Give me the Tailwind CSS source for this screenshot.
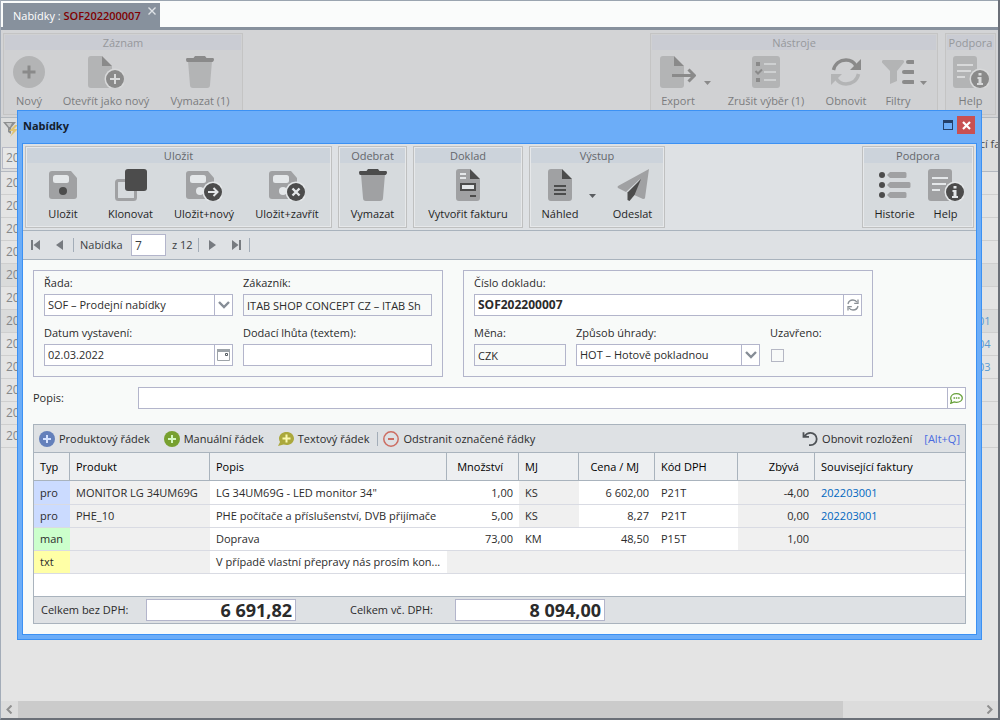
<!DOCTYPE html>
<html lang="cs">
<head>
  <meta charset="UTF-8">
  <title>Nabídky : SOF202200007</title>
  <meta name="viewport" content="width=device-width, initial-scale=1.0">
  <script src="https://cdn.jsdelivr.net/npm/@tailwindcss/browser@4"></script>
</head>
<body class="font-['Open_Sans','Noto_Sans',sans-serif] text-[11px] leading-4 text-[#2b2b2b]">

  <!-- icons: --hi dark part, --lo light part, --cut gaps -->
  <svg class="hidden" aria-hidden="true">
    <symbol id="i-new" viewBox="0 0 32 32"><circle cx="16" cy="16" r="16" class="fill-(--lo)"/><path d="M14.500 9.500h3v5h5v3h-5v5h-3v-5h-5v-3h5z" class="fill-(--hi)"/></symbol>
    <symbol id="i-doc" viewBox="0 0 32 32"><path d="M7 0h11v8q0 2 2 2h8v19a3 3 0 0 1-3 3H7a3 3 0 0 1-3-3V3a3 3 0 0 1 3-3z" class="fill-(--lo)"/><path d="M18 0l10 10H18z" class="fill-(--hi)"/></symbol>
    <symbol id="i-open" viewBox="0 0 36 32"><path d="M3 0h11v10h10v19a3 3 0 0 1-3 3H3a3 3 0 0 1-3-3V3a3 3 0 0 1 3-3z" class="fill-(--lo)"/><path d="M14 0l10 10H14z" class="fill-(--hi)"/><circle cx="27" cy="23" r="10.500" class="fill-(--cut)"/><circle cx="27" cy="23" r="9" class="fill-(--hi)"/><path d="M26 18h2v4h4v2h-4v4h-2v-4h-4v-2h4z" class="fill-(--cut)"/></symbol>
    <symbol id="i-trash" viewBox="0 0 32 32"><path d="M4 5h24l-2 24a3 3 0 0 1-3 3H9a3 3 0 0 1-3-3z" class="fill-(--lo)"/><path d="M11 0h10l1.500 2H29q1 0 1 1.500T28.500 6h-25Q2 6 2 3.500 2 2 3 2h6.500z" class="fill-(--hi)"/></symbol>
    <symbol id="i-export" viewBox="0 0 36 32"><path d="M3 0h11v10h10v19a3 3 0 0 1-3 3H3a3 3 0 0 1-3-3V3a3 3 0 0 1 3-3z" class="fill-(--lo)"/><path d="M14 0l10 10H14z" class="fill-(--hi)"/><path d="M12 19.500h22M28.500 13.500l6 6-6 6" fill="none" stroke-width="3" class="stroke-(--hi)"/></symbol>
    <symbol id="i-checks" viewBox="0 0 32 32"><rect x="2" width="28" height="32" rx="3" class="fill-(--lo)"/><path d="M6 6h4v4H6zM6 22h4v4H6z" class="fill-(--hi)"/><path d="M5.500 15l2.500 2.500 4-4" fill="none" stroke-width="2" class="stroke-(--hi)"/><path d="M14 8h12M14 16h12M14 24h12" stroke-width="1.500" class="stroke-(--cut)"/></symbol>
    <symbol id="i-refresh" viewBox="0 0 32 32"><path d="M3.500 14C5 7.500 10 4 16 4c4 0 8 2 10 6" fill="none" stroke-width="3.500" class="stroke-(--hi)"/><path d="M31 3v11H20z" class="fill-(--hi)"/><path d="M28.500 18C27 24.500 22 28 16 28c-4 0-8-2-10-6" fill="none" stroke-width="3.500" class="stroke-(--lo)"/><path d="M1 29V18h11z" class="fill-(--lo)"/></symbol>
    <symbol id="i-filter" viewBox="0 0 32 32"><path d="M1 4h20q2 1 .5 3L15 15v10l-7 3V15L.5 7Q-1 5 1 4z" class="fill-(--lo)"/><path d="M26 6h5M22 16h9M22 26h9" stroke-width="4" stroke-linecap="round" class="stroke-(--hi)"/></symbol>
    <symbol id="i-help" viewBox="0 0 36 32"><rect width="24" height="32" rx="3" class="fill-(--lo)"/><path d="M4 9h16M4 15h14M4 21h8" stroke-width="1.800" class="stroke-(--cut)"/><circle cx="27" cy="23" r="10.500" class="fill-(--cut)"/><circle cx="27" cy="23" r="9" class="fill-(--hi)"/><path d="M25.500 17h3v2.500h-3zM24.500 21h4v6h1.500v2h-6v-2h1.500v-4h-1z" class="fill-(--cut)"/></symbol>
    <symbol id="i-floppy" viewBox="0 0 36 32"><path d="M3 2h19l6 7v18a3 3 0 0 1-3 3H3a3 3 0 0 1-3-3V5a3 3 0 0 1 3-3z" class="fill-(--lo)"/><rect x="4" y="6" width="16" height="8" rx="2.500" class="fill-(--cut)"/></symbol>
    <symbol id="i-save" viewBox="0 0 32 32"><use href="#i-floppy" x="2" width="36" height="32"/><circle cx="16" cy="22" r="4" class="fill-(--hi)"/></symbol>
    <symbol id="i-savenew" viewBox="0 0 36 32"><use href="#i-floppy" width="36" height="32"/><circle cx="14" cy="22" r="4" class="fill-(--cut)"/><circle cx="27" cy="23" r="10.500" class="fill-(--cut)"/><circle cx="27" cy="23" r="9" class="fill-(--hi)"/><path d="M22 23h9M27.500 19l4 4-4 4" fill="none" stroke-width="2" class="stroke-(--cut)"/></symbol>
    <symbol id="i-saveclose" viewBox="0 0 36 32"><use href="#i-floppy" width="36" height="32"/><circle cx="14" cy="22" r="4" class="fill-(--cut)"/><circle cx="27" cy="23" r="10.500" class="fill-(--cut)"/><circle cx="27" cy="23" r="9" class="fill-(--hi)"/><path d="M23.500 19.500l7 7M30.500 19.500l-7 7" stroke-width="2.400" class="stroke-(--cut)"/></symbol>
    <symbol id="i-clone" viewBox="0 0 32 32"><rect x="1.500" y="11.500" width="19" height="19" rx="2" fill="none" stroke-width="3" class="stroke-(--lo)"/><rect x="10" width="22" height="22" rx="3" class="fill-(--hi)"/></symbol>
    <symbol id="i-invoice" viewBox="0 0 32 32"><use href="#i-doc" width="32" height="32"/><path d="M8 5h6M8 9h6" stroke-width="2" class="stroke-(--cut)"/><rect x="9" y="15" width="14" height="6" stroke-width="2" class="fill-(--cut) stroke-(--hi)"/><path d="M18 27h6" stroke-width="2" class="stroke-(--hi)"/></symbol>
    <symbol id="i-preview" viewBox="0 0 32 32"><use href="#i-doc" width="32" height="32"/><path d="M10 17h12M10 21h12M10 25h12" stroke-width="2" class="stroke-(--hi)"/></symbol>
    <symbol id="i-send" viewBox="0 0 32 32"><path d="M32 0L1 17q-1 1 0 2l8 4 14-13L15 25l11 5q2 0 2-1z" class="fill-(--lo)"/><path d="M24 10L10.500 23.500V31l2 1 5-6z" class="fill-(--hi)"/></symbol>
    <symbol id="i-history" viewBox="0 0 32 32"><g class="fill-(--hi)"><circle cx="3" cy="6" r="3"/><circle cx="3" cy="16" r="3"/><circle cx="3" cy="26" r="3"/></g><path d="M8 6l3-3h15q1.500 0 1.500 1.500v3Q27.500 9 26 9H11zM8 16l3-3h19q1.500 0 1.500 1.500v3q0 1.500-1.500 1.500H11zM8 26l3-3h15q1.500 0 1.500 1.500v3q0 1.500-1.500 1.500H11z" class="fill-(--lo)"/></symbol>
    <symbol id="i-chevron" viewBox="0 0 12 8"><path d="M1 1l5 5 5-5" fill="none" stroke="#868d96" stroke-width="2.400"/></symbol>
    <symbol id="i-plus" viewBox="0 0 16 16"><circle cx="8" cy="8" r="8" fill="currentColor"/><path d="M7 4h2v3h3v2H9v3H7V9H4V7h3z" class="fill-(--cut)"/></symbol>
  </svg>

  <div class="relative flex flex-col min-h-screen overflow-hidden border-l border-l-[#a3acb8] border-r-2 border-r-[#6b7078] border-b-2 border-b-[#6b7078] bg-[#e4e4e4]">

    <header class="flex items-end h-[30px] pl-[2px] bg-[#fafcfb] border-t border-t-[#9aa5b0] border-b-3 border-b-[#87919d]">
      <div class="flex items-start h-6 w-[157px] pl-[10px] pr-1 bg-[#87919d] text-white">
        <span class="pt-[5px] font-medium flex-1 whitespace-nowrap">Nabídky : <span class="font-semibold text-[#800000]">SOF202200007</span></span>
        <button class="p-0 mt-1" aria-label="Zavřít záložku"><svg class="w-2 h-2" viewBox="0 0 8 8"><path d="M.5.5l7 7M7.500.5l-7 7" stroke="#dfe3e7" stroke-width="1.400"/></svg></button>
      </div>
    </header>

    <!-- main ribbon -->
    <div class="flex justify-between px-[2px] pt-[3px] pb-[2px] bg-[#d3d4d6] border-b border-[#b3b8bd] text-[#7b7c7e] [--hi:#8a8a8a] [--lo:#b3b4b5] [--cut:#d8d9da]">
      <section class="border border-[#c4c4c4] p-px bg-[#d0d1d3]">
        <h2 class="h-[15px] leading-[15px] text-center bg-[#caccd3] text-[#96989c]">Záznam</h2>
        <div class="flex pt-[6px] pb-1">
          <button class="flex flex-col items-center gap-[5px] w-12 whitespace-nowrap"><svg class="w-8 h-8"><use href="#i-new"/></svg>Nový</button>
          <button class="flex flex-col items-center gap-[5px] w-[106px] whitespace-nowrap"><svg class="w-9 h-8"><use href="#i-open"/></svg>Otevřít jako nový</button>
          <button class="flex flex-col items-center gap-[5px] w-[82px] whitespace-nowrap"><svg class="w-8 h-8"><use href="#i-trash"/></svg>Vymazat (1)</button>
        </div>
      </section>
      <div class="flex gap-[7px]">
        <section class="border border-[#c4c4c4] p-px bg-[#d0d1d3]">
          <h2 class="h-[15px] leading-[15px] text-center bg-[#caccd3] text-[#96989c]">Nástroje</h2>
          <div class="flex pt-[6px] pb-1">
            <button class="flex flex-col items-center gap-[5px] w-[52px] whitespace-nowrap"><svg class="w-9 h-8"><use href="#i-export"/></svg>Export</button>
            <button class="w-3 pt-[25px] flex items-start" aria-label="Možnosti exportu"><svg class="w-[7px] h-1" viewBox="0 0 7 4"><path d="M0 0h7L3.500 4z" fill="#8a8a8a"/></svg></button>
            <button class="flex flex-col items-center gap-[5px] w-[100px] whitespace-nowrap"><svg class="w-8 h-8"><use href="#i-checks"/></svg>Zrušit výběr (1)</button>
            <button class="flex flex-col items-center gap-[5px] w-[60px] whitespace-nowrap"><svg class="w-8 h-8"><use href="#i-refresh"/></svg>Obnovit</button>
            <button class="flex flex-col items-center gap-[5px] w-[44px] whitespace-nowrap"><svg class="w-8 h-8"><use href="#i-filter"/></svg>Filtry</button>
            <button class="w-4 pt-[25px] flex items-start" aria-label="Možnosti filtru"><svg class="w-[7px] h-1" viewBox="0 0 7 4"><path d="M0 0h7L3.500 4z" fill="#8a8a8a"/></svg></button>
          </div>
        </section>
        <section class="border border-[#c4c4c4] p-px bg-[#d0d1d3]">
          <h2 class="h-[15px] leading-[15px] text-center bg-[#caccd3] text-[#96989c]">Podpora</h2>
          <div class="flex pt-[6px] pb-1">
            <button class="flex flex-col items-center gap-[5px] w-[47px] whitespace-nowrap"><svg class="w-9 h-8"><use href="#i-help"/></svg>Help</button>
          </div>
        </section>
      </div>
    </div>

    <!-- list behind the dialog -->
    <table class="w-full table-fixed border-collapse text-[#85878a] text-[12px] whitespace-nowrap">
      <thead>
        <tr class="h-[27px] bg-[#dcdddd]">
          <th class="w-[70px] p-0 text-left align-top"><svg class="w-4 h-4 mt-[3px] ml-[2px]" viewBox="0 0 16 16"><path d="M0 1h13L8 7v6l-3-2V7z" fill="#8d8f90"/><path d="M3 2h6L7 6H6z" fill="#c6c8c8"/><path d="M12 4l-6 6h4l-3 6 8-8h-4l4-4z" fill="#e0c374"/></svg></th>
          <th class="p-0"></th>
          <th rowspan="2" class="w-[68px] pl-[5px] text-left text-[11px] font-normal text-[#4b4c4e] border-b border-[#b3b8c0]">Související faktury</th>
        </tr>
        <tr class="h-[26px] bg-[#dcdddd]">
          <td class="p-px border-b border-[#b3b8c0]"><input aria-label="Filtr" value="2022" class="block w-full h-[22px] px-[3px] bg-[#e6e7e7] border border-[#b9bbc6]"></td>
          <td class="border-b border-[#b3b8c0]"></td>
        </tr>
      </thead>
      <tbody id="listRows"></tbody>
    </table>

    <div class="mt-auto flex h-[17px] bg-[#dcdcdc]">
      <button class="w-[17px] flex items-center justify-center" aria-label="Vlevo"><svg class="w-[7px] h-[9px]" viewBox="0 0 7 9"><path d="M5.500.5l-4 4 4 4" fill="none" stroke="#8f8f8f" stroke-width="2"/></svg></button>
      <div class="flex-1"><div class="h-full w-6/7 bg-[#cbcbcb]"></div></div>
      <button class="w-[17px] flex items-center justify-center" aria-label="Vpravo"><svg class="w-[7px] h-[9px]" viewBox="0 0 7 9"><path d="M1.500.5l4 4-4 4" fill="none" stroke="#8f8f8f" stroke-width="2"/></svg></button>
    </div>

    <!-- dialog -->
    <div role="dialog" aria-labelledby="dlgTitle" class="absolute top-[110px] left-4 right-4 border border-[#3c91f3] bg-[#6cadf8] px-1 pb-1">
      <div class="flex items-center h-8 pl-[1px] pr-[2px] pb-1">
        <h1 id="dlgTitle" class="flex-1 pt-[2px] font-bold text-[#14202e]">Nabídky</h1>
        <button class="w-[10px] h-[10px] mr-1 border border-t-3 border-[#24406a]" aria-label="Maximalizovat"></button>
        <button class="w-[18px] h-[18px] bg-[#c85052] flex items-center justify-center" aria-label="Zavřít"><svg class="w-[9px] h-[9px]" viewBox="0 0 9 9"><path d="M1 1l7 7M8 1L1 8" stroke="#fff" stroke-width="2.200"/></svg></button>
      </div>

      <div class="border border-[#3c91f3] bg-[#f8faf9]">
        <div class="flex gap-[6px] p-[2px] bg-[#dee1e4] border-b border-[#a9b3bd] text-[#1f1f1f] [--hi:#4c4c4c] [--lo:#a0a1a3] [--cut:#e4e7e9]">
          <section class="border border-[#bfc0c0] bg-[#e6e8ea] p-px">
            <h2 class="h-[15px] leading-[15px] text-center bg-[#ccd3db] text-[#64676b]">Uložit</h2>
            <div class="flex pt-[6px] pb-1 px-px bg-[#d6dadd]">
              <button class="flex flex-col items-center gap-[5px] w-[70px] whitespace-nowrap"><svg class="w-8 h-8"><use href="#i-save"/></svg>Uložit</button>
              <button class="flex flex-col items-center gap-[5px] w-[65px] whitespace-nowrap"><svg class="w-8 h-8"><use href="#i-clone"/></svg>Klonovat</button>
              <button class="flex flex-col items-center gap-[5px] w-[82px] whitespace-nowrap"><svg class="w-9 h-8"><use href="#i-savenew"/></svg>Uložit+nový</button>
              <button class="flex flex-col items-center gap-[5px] w-[84px] whitespace-nowrap"><svg class="w-9 h-8"><use href="#i-saveclose"/></svg>Uložit+zavřít</button>
            </div>
          </section>
          <section class="border border-[#bfc0c0] bg-[#e6e8ea] p-px">
            <h2 class="h-[15px] leading-[15px] text-center bg-[#ccd3db] text-[#64676b]">Odebrat</h2>
            <div class="flex pt-[6px] pb-1 bg-[#d6dadd]">
              <button class="flex flex-col items-center gap-[5px] w-[65px] whitespace-nowrap"><svg class="w-8 h-8"><use href="#i-trash"/></svg>Vymazat</button>
            </div>
          </section>
          <section class="border border-[#bfc0c0] bg-[#e6e8ea] p-px">
            <h2 class="h-[15px] leading-[15px] text-center bg-[#ccd3db] text-[#64676b]">Doklad</h2>
            <div class="flex pt-[6px] pb-1 bg-[#d6dadd]">
              <button class="flex flex-col items-center gap-[5px] w-[106px] whitespace-nowrap"><svg class="w-8 h-8"><use href="#i-invoice"/></svg>Vytvořit fakturu</button>
            </div>
          </section>
          <section class="border border-[#bfc0c0] bg-[#e6e8ea] p-px">
            <h2 class="h-[15px] leading-[15px] text-center bg-[#ccd3db] text-[#64676b]">Výstup</h2>
            <div class="flex pt-[6px] pb-1 bg-[#d6dadd]">
              <button class="flex flex-col items-center gap-[5px] w-[58px] whitespace-nowrap"><svg class="w-8 h-8"><use href="#i-preview"/></svg>Náhled</button>
              <button class="w-[13px] pt-[25px] flex items-start" aria-label="Možnosti náhledu"><svg class="w-[7px] h-1" viewBox="0 0 7 4"><path d="M0 0h7L3.500 4z" fill="#5a5d60"/></svg></button>
              <button class="flex flex-col items-center gap-[5px] w-[61px] whitespace-nowrap"><svg class="w-8 h-8"><use href="#i-send"/></svg>Odeslat</button>
            </div>
          </section>
          <section class="ml-auto border border-[#bfc0c0] bg-[#e6e8ea] p-px">
            <h2 class="h-[15px] leading-[15px] text-center bg-[#ccd3db] text-[#64676b]">Podpora</h2>
            <div class="flex pt-[6px] pb-1 pr-[6px] bg-[#d6dadd]">
              <button class="flex flex-col items-center gap-[5px] w-[61px] whitespace-nowrap"><svg class="w-8 h-8"><use href="#i-history"/></svg>Historie</button>
              <button class="flex flex-col items-center gap-[5px] w-[41px] whitespace-nowrap"><svg class="w-9 h-8"><use href="#i-help"/></svg>Help</button>
            </div>
          </section>
        </div>

        <nav class="flex items-center h-[29px] pl-2 bg-[#dee1e4] border-b border-[#a9b3bd] text-[#3b3e42]">
          <button class="mr-4" aria-label="První"><svg class="w-[9px] h-[10px]" viewBox="0 0 9 10"><path d="M0 0h2v10H0zM9 0v10L2.500 5z" fill="#777b80"/></svg></button>
          <button class="mr-[10px]" aria-label="Předchozí"><svg class="w-[7px] h-[10px]" viewBox="0 0 7 10"><path d="M7 0v10L0 5z" fill="#777b80"/></svg></button>
          <span class="w-px h-[14px] mr-[6px] bg-[#a3adb8]"></span>
          <label for="pos" class="w-[51px]">Nabídka</label>
          <input id="pos" value="7" class="w-[35px] h-[22px] px-[3px] text-[12px] bg-white border border-[#b3b5cb]">
          <span class="w-[26px] ml-[6px]">z 12</span>
          <span class="w-px h-[14px] mr-[10px] bg-[#a3adb8]"></span>
          <button class="mr-4" aria-label="Další"><svg class="w-[7px] h-[10px]" viewBox="0 0 7 10"><path d="M0 0v10l7-5z" fill="#777b80"/></svg></button>
          <button class="mr-2" aria-label="Poslední"><svg class="w-[9px] h-[10px]" viewBox="0 0 9 10"><path d="M7 0h2v10H7zM0 0v10l6.500-5z" fill="#777b80"/></svg></button>
          <span class="w-px h-[14px] bg-[#a3adb8]"></span>
        </nav>

        <form class="p-[10px]" autocomplete="off">
          <div class="flex gap-5">
            <div class="grid grid-cols-[189px_189px] gap-x-[10px] gap-y-[9px] pt-1 px-[10px] pb-[10px] border border-[#b3b5cb]">
              <div>
                <label for="rada" class="block mb-[3px]">Řada:</label>
                <div class="flex h-[22px] bg-white border border-[#b3b5cb]">
                  <select id="rada" class="flex-1 min-w-0 pl-[3px] appearance-none"><option>SOF – Prodejní nabídky</option></select>
                  <span class="w-[18px] border-l border-[#b3b5cb] flex items-center justify-center"><svg class="w-3 h-2"><use href="#i-chevron"/></svg></span>
                </div>
              </div>
              <div>
                <label for="zakaznik" class="block mb-[3px]">Zákazník:</label>
                <input id="zakaznik" readonly value="ITAB SHOP CONCEPT CZ – ITAB Sh" class="block w-full h-[22px] px-[3px] border border-[#b3b5cb]">
              </div>
              <div>
                <label for="datum" class="block mb-[3px]">Datum vystavení:</label>
                <div class="flex h-[22px] bg-white border border-[#b3b5cb]">
                  <input id="datum" value="02.03.2022" class="flex-1 min-w-0 pl-[3px]">
                  <button type="button" class="w-[18px] border-l border-[#b3b5cb] flex items-center justify-center" aria-label="Kalendář"><svg class="w-[13px] h-3" viewBox="0 0 13 12"><path d="M.5 1h12v10.500H.5z" fill="#fff" stroke="#9da3a8"/><path d="M0 0h13v3H0z" fill="#9da3a8"/><path d="M8.500 4.500h2v2h-2z" fill="none" stroke="#555b61"/></svg></button>
                </div>
              </div>
              <div>
                <label for="lhuta" class="block mb-[3px]">Dodací lhůta (textem):</label>
                <input id="lhuta" class="block w-full h-[22px] px-[3px] bg-white border border-[#b3b5cb]">
              </div>
            </div>

            <div class="grid grid-cols-[92px_184px_92px] gap-x-[10px] gap-y-[9px] pt-1 px-[10px] pb-[10px] border border-[#b3b5cb]">
              <div class="col-span-3">
                <label for="cislo" class="block mb-[3px]">Číslo dokladu:</label>
                <div class="flex h-[22px] bg-white border border-[#b3b5cb]">
                  <input id="cislo" value="SOF202200007" class="flex-1 min-w-0 pl-[3px] text-[12px] font-bold">
                  <button type="button" class="w-[18px] border-l border-[#b3b5cb] flex items-center justify-center" aria-label="Přečíslovat"><svg class="w-3 h-3" viewBox="0 0 12 12"><g fill="none" stroke="#8a9096" stroke-width="1.300"><path d="M1 5C1.500 2.500 3.500 1 6 1c1.800 0 3.200.8 4 2.200M11 7c-.5 2.500-2.500 4-5 4-1.800 0-3.200-.8-4-2.200"/><path d="M11 .5v3.800H7.200M1 11.500V7.700h3.800"/></g></svg></button>
                </div>
              </div>
              <div>
                <label for="mena" class="block mb-[3px]">Měna:</label>
                <input id="mena" readonly value="CZK" class="block w-full h-[22px] px-[3px] border border-[#b3b5cb]">
              </div>
              <div>
                <label for="uhrada" class="block mb-[3px]">Způsob úhrady:</label>
                <div class="flex h-[22px] bg-white border border-[#b3b5cb]">
                  <select id="uhrada" class="flex-1 min-w-0 pl-[3px] appearance-none"><option>HOT – Hotově pokladnou</option></select>
                  <span class="w-[18px] border-l border-[#b3b5cb] flex items-center justify-center"><svg class="w-3 h-2"><use href="#i-chevron"/></svg></span>
                </div>
              </div>
              <div>
                <label for="uzavreno" class="block mb-2">Uzavřeno:</label>
                <input id="uzavreno" type="checkbox" class="block ml-px w-[13px] h-[13px] appearance-none border border-[#b5b7c4] checked:bg-[#87919d]">
              </div>
            </div>
          </div>

          <div class="flex items-center mt-[10px]">
            <label for="popis" class="w-[105px]">Popis:</label>
            <div class="flex flex-1 h-[22px] bg-white border border-[#b3b5cb]">
              <input id="popis" class="flex-1 min-w-0 px-[3px]">
              <button type="button" class="w-[18px] border-l border-[#b3b5cb] flex items-center justify-center" aria-label="Poznámka"><svg class="w-[13px] h-[11px]" viewBox="0 0 13 11"><path d="M6.500.7c3.300 0 5.800 1.900 5.800 4.300S9.800 9.300 6.500 9.300c-.9 0-1.700-.1-2.400-.4L.8 10.300l.7-2.500C1 7.100.7 6.200.7 5.300.7 2.600 3.200.7 6.500.7z" fill="none" stroke="#67a03a" stroke-width="1.300"/><path d="M3.500 4.300H5v1.500H3.500zM5.800 4.300h1.500v1.500H5.800zM8.100 4.300h1.500v1.500H8.100z" fill="#67a03a"/></svg></button>
            </div>
          </div>

          <div class="mt-[15px] border border-[#a9b3bd] bg-white">
            <div class="flex items-center h-7 px-[5px] bg-[#dee1e4] border-b border-[#a9b3bd] whitespace-nowrap">
              <button type="button" class="flex items-center gap-1 mr-[14px]"><svg class="w-4 h-4 text-[#6480bb] [--cut:#d5e2ff]"><use href="#i-plus"/></svg>Produktový řádek</button>
              <button type="button" class="flex items-center gap-1 mr-[14px]"><svg class="w-4 h-4 text-[#77a02f] [--cut:#d4f8c0]"><use href="#i-plus"/></svg>Manuální řádek</button>
              <button type="button" class="flex items-center gap-1 mr-2"><svg class="w-4 h-4" viewBox="0 0 16 16"><path d="M8.500 1C12.600 1 16 3.700 16 7.500S12.600 14 8.500 14c-1 0-2-.2-2.800-.5L0 15l2-4C1.300 10 1 8.800 1 7.500 1 3.700 4.400 1 8.500 1z" fill="#aba83c"/><path d="M7.500 3.500h2v3h3v2h-3v3h-2v-3h-3v-2h3z" fill="#fbf9b0"/></svg>Textový řádek</button>
              <span class="w-px h-[14px] mr-[5px] bg-[#a3adb8]"></span>
              <button type="button" class="flex items-center gap-1"><svg class="w-4 h-4" viewBox="0 0 16 16"><circle cx="8" cy="8" r="7.200" fill="none" stroke="#cc6d62" stroke-width="1.500"/><path d="M5 7h6v2H5z" fill="#cc6d62"/></svg>Odstranit označené řádky</button>
              <button type="button" class="flex items-center gap-1 ml-auto mr-3"><svg class="w-4 h-4" viewBox="0 0 16 16"><path d="M2.500 5.200C4 2.900 6 1.800 8.500 1.800a6.200 6.200 0 1 1 0 12.400H7M1.500 1.300v4.500H7" fill="none" stroke="#4e5256" stroke-width="1.800"/></svg>Obnovit rozložení</button>
              <a href="#" class="text-[#4a6be0]">[Alt+Q]</a>
            </div>
            <table class="w-full table-fixed border-separate border-spacing-0 whitespace-nowrap">
              <thead class="bg-[#edeff1] text-black [&_th]:border-b [&_th]:border-[#a9b3bd]">
                <tr class="h-7">
                  <th class="w-9 px-[6px] text-left font-medium border-r">Typ</th>
                  <th class="w-[140px] px-[6px] text-left font-medium border-r">Produkt</th>
                  <th class="w-[237px] px-[6px] text-left font-medium border-r">Popis</th>
                  <th class="w-[72px] pr-[15px] text-right font-medium border-r">Množství</th>
                  <th class="w-[60px] px-[6px] text-left font-medium border-r">MJ</th>
                  <th class="w-[76px] pr-[15px] text-right font-medium border-r">Cena / MJ</th>
                  <th class="w-[83px] px-[6px] text-left font-medium border-r">Kód DPH</th>
                  <th class="w-[77px] pr-[15px] text-right font-medium border-r">Zbývá</th>
                  <th class="px-[6px] text-left font-medium">Související faktury</th>
                </tr>
              </thead>
              <tbody class="[&_td]:border-b [&_td]:border-[#d9dbe3]">
                <tr class="h-6">
                  <td class="px-[6px] bg-[#cbdbff]">pro</td>
                  <td class="px-[6px] bg-[#f0f0f0]">MONITOR LG 34UM69G</td>
                  <td class="px-[6px]">LG 34UM69G - LED monitor 34"</td>
                  <td class="px-[6px] text-right">1,00</td>
                  <td class="px-[6px] bg-[#f0f0f0]">KS</td>
                  <td class="px-[6px] text-right">6 602,00</td>
                  <td class="px-[6px]">P21T</td>
                  <td class="px-[6px] text-right bg-[#f0f0f0]">-4,00</td>
                  <td class="px-[6px] bg-[#f0f0f0]"><a href="#" class="text-[#0067c0]">202203001</a></td>
                </tr>
                <tr class="h-[23px]">
                  <td class="px-[6px] bg-[#cbdbff]">pro</td>
                  <td class="px-[6px] bg-[#f0f0f0]">PHE_10</td>
                  <td class="px-[6px]">PHE počítače a příslušenství, DVB přijímače</td>
                  <td class="px-[6px] text-right">5,00</td>
                  <td class="px-[6px] bg-[#f0f0f0]">KS</td>
                  <td class="px-[6px] text-right">8,27</td>
                  <td class="px-[6px]">P21T</td>
                  <td class="px-[6px] text-right bg-[#f0f0f0]">0,00</td>
                  <td class="px-[6px] bg-[#f0f0f0]"><a href="#" class="text-[#0067c0]">202203001</a></td>
                </tr>
                <tr class="h-[23px]">
                  <td class="px-[6px] bg-[#ccffcc]">man</td>
                  <td class="px-[6px] bg-[#f0f0f0]"></td>
                  <td class="px-[6px]">Doprava</td>
                  <td class="px-[6px] text-right">73,00</td>
                  <td class="px-[6px]">KM</td>
                  <td class="px-[6px] text-right">48,50</td>
                  <td class="px-[6px]">P15T</td>
                  <td class="px-[6px] text-right bg-[#f0f0f0]">1,00</td>
                  <td class="px-[6px] bg-[#f0f0f0]"></td>
                </tr>
                <tr class="h-[23px]">
                  <td class="px-[6px] bg-[#ffffa6]">txt</td>
                  <td class="px-[6px] bg-[#f0f0f0]"></td>
                  <td class="px-[6px]">V případě vlastní přepravy nás prosím kon...</td>
                  <td colspan="6" class="bg-[#f0f0f0]"></td>
                </tr>
              </tbody>
            </table>
            <div class="flex items-center h-[27px] mt-[22px] pl-[7px] bg-[#dee1e4] border-t border-[#a9b3bd]">
              <label for="bezDph" class="w-[105px]">Celkem bez DPH:</label>
              <input id="bezDph" readonly value="6 691,82" class="w-[150px] h-[22px] px-[3px] text-right text-[18px] font-bold bg-white border border-[#b3b5cb]">
              <label for="vcDph" class="w-[105px] ml-[54px]">Celkem vč. DPH:</label>
              <input id="vcDph" readonly value="8 094,00" class="w-[150px] h-[22px] px-[3px] text-right text-[18px] font-bold bg-white border border-[#b3b5cb]">
            </div>
          </div>
        </form>
      </div>
    </div>
  </div>

  <script>
    const faktury = ['', '', '', '', '', '', '202203001', '202203004', '202203003', '', '', ''];

    document.getElementById('listRows').innerHTML = faktury.map((f, i) => {
      const bg = (i === 4 || i === 6) ? 'bg-[#dadbdb]' : 'bg-[#e4e4e4]';
      return `<tr class="h-[23px] border-b border-[#cfcfcf] ${bg}">
        <td class="pl-[5px]">2022</td>
        <td></td>
        <td class="pl-1 text-[11px]"><a href="#" class="text-[#5b9bd0]">${f}</a></td>
      </tr>`;
    }).join('');
  </script>
</body>
</html>
